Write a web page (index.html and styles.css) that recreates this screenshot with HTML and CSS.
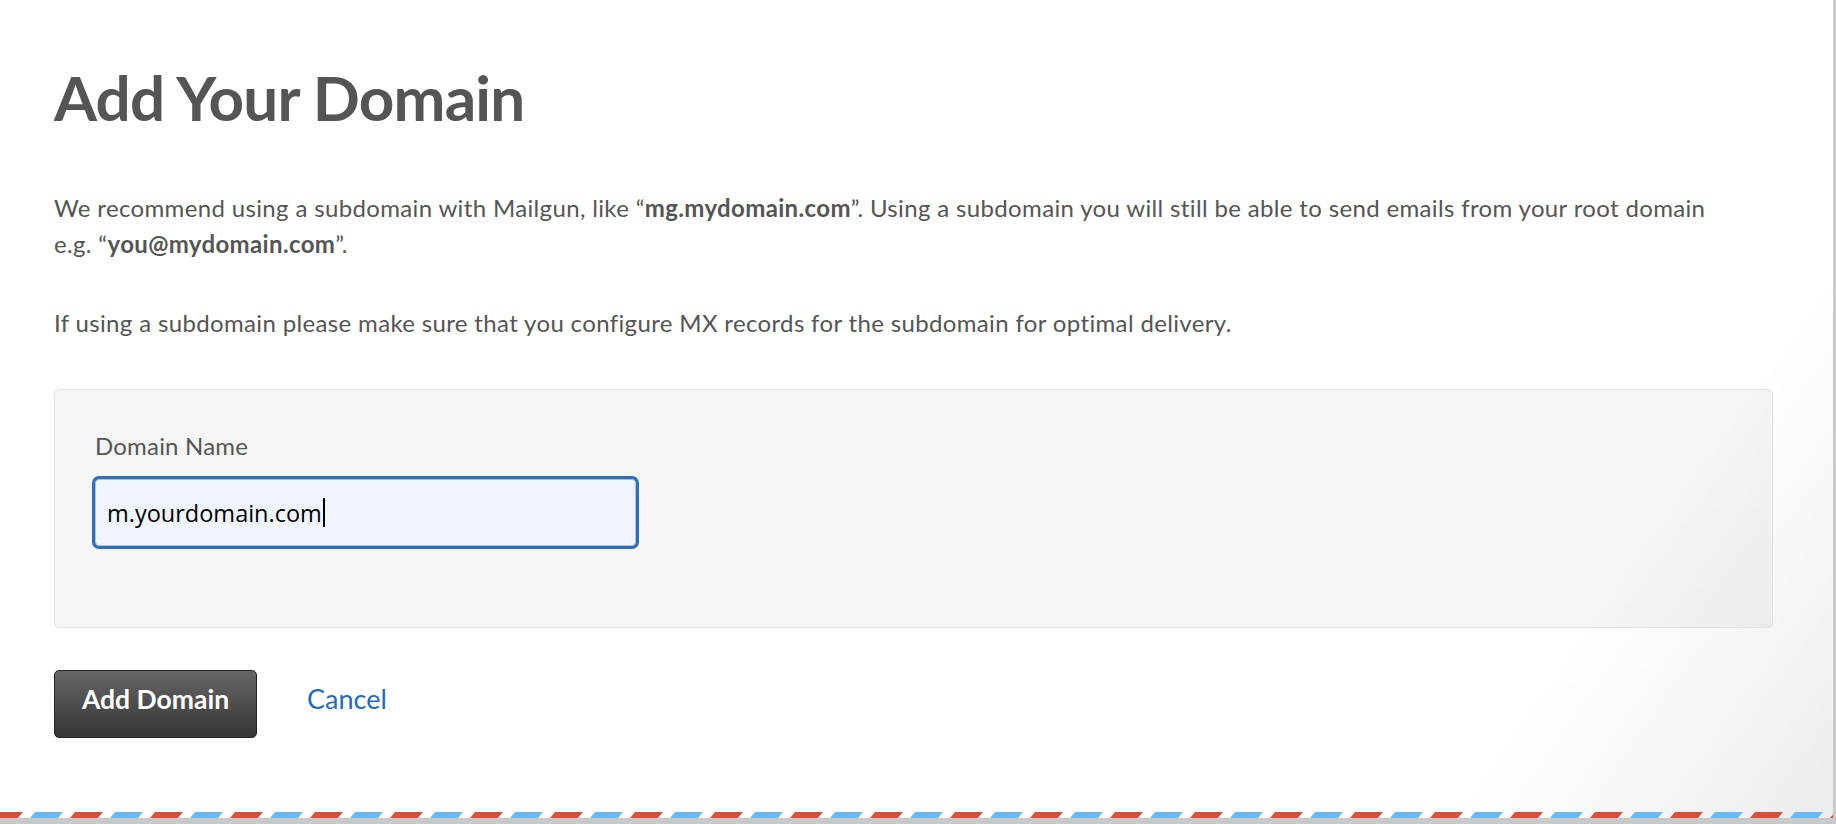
FILE: index.html
```html
<!DOCTYPE html>
<html lang="en">
<head>
<meta charset="utf-8">
<title>Add Your Domain</title>
<link rel="stylesheet" href="styles.css">
</head>
<body>
<div class="page">
  <main class="content">
    <h1 class="title">Add Your Domain</h1>
    <p class="lead">We recommend using a subdomain with Mailgun, like “<b>mg.mydomain.com</b>”. Using a subdomain you will still be able to send emails from your root domain<br>e.g. “<b>you@mydomain.com</b>”.</p>
    <p class="lead lead-second">If using a subdomain please make sure that you configure MX records for the subdomain for optimal delivery.</p>
    <form class="well">
      <label class="field-label">Domain Name</label>
      <div class="field-input"><span class="field-value">m.yourdomain.com</span><span class="caret"></span></div>
    </form>
    <div class="actions">
      <button class="btn" type="button">Add Domain</button>
      <a class="cancel" href="#">Cancel</a>
    </div>
  </main>
  <div class="airmail">
    <svg width="100%" height="6" xmlns="http://www.w3.org/2000/svg">
      <defs>
        <pattern id="stripes" x="-10" y="0" width="80" height="6" patternUnits="userSpaceOnUse">
          <polygon points="0,6 28,6 33,0 5,0" fill="#d94f3f"/>
          <polygon points="40,6 68,6 73,0 45,0" fill="#6cb8f2"/>
        </pattern>
      </defs>
      <rect width="100%" height="6" fill="url(#stripes)"/>
    </svg>
  </div>
</div>
</body>
</html>
```

FILE: styles.css
```css
html, body {
  margin: 0;
  padding: 0;
}

body {
  background: #c9c9c9;
  padding: 0 3px 6px 0;
  height: 824px;
  box-sizing: border-box;
  font-family: Lato, "Open Sans", "Liberation Sans", sans-serif;
  color: #555555;
}

.page {
  height: 818px;
  display: flex;
  flex-direction: column;
  background: linear-gradient(125deg, #ffffff 84%, #ececec 100%);
}

.content {
  padding: 60px 60px 0 54px;
}

.title {
  margin: 0;
  font-size: 62px;
  line-height: 74px;
  font-weight: 700;
  letter-spacing: -0.8px;
  color: #555555;
}

.lead {
  margin: 56px 0 0 0;
  font-size: 24px;
  line-height: 36px;
  letter-spacing: 0.35px;
  color: #555555;
}

.lead b {
  font-weight: 700;
}

.lead-second {
  margin-top: 43px;
}

.well {
  margin: 48px 0 0 0;
  padding: 38px 40px 81px 40px;
  background: rgba(0, 0, 0, 0.04);
  border: 1px solid #e2e2e2;
  border-radius: 5px;
}

.field-label {
  display: block;
  font-size: 24px;
  line-height: 36px;
  letter-spacing: 0.2px;
  color: #555555;
}

.field-input {
  margin-top: 15px;
  width: 541px;
  height: 67px;
  box-sizing: border-box;
  display: flex;
  align-items: center;
  padding-left: 11px;
  background: #f0f5fd;
  border: 1px solid #b9c0ca;
  border-radius: 4px;
  box-shadow: 0 0 0 3px #2b6fbf;
  font-family: "Open Sans", "DejaVu Sans", sans-serif;
  font-size: 23.5px;
  color: #000000;
}

.caret {
  display: inline-block;
  width: 2px;
  height: 29px;
  background: #000000;
  margin-left: 1px;
}

.actions {
  margin-top: 42px;
  display: flex;
  align-items: baseline;
  gap: 50px;
}

.btn {
  width: 203px;
  height: 68px;
  box-sizing: border-box;
  border: 1px solid #252525;
  border-radius: 5px;
  background: linear-gradient(#666666, #353535);
  color: #ffffff;
  font-family: Lato, "Open Sans", sans-serif;
  font-size: 26.5px;
  font-weight: 700;
  padding: 0 0 10px 0;
  cursor: pointer;
}

.cancel {
  font-size: 27px;
  color: #1f6cc0;
  text-decoration: none;
}

.airmail {
  margin-top: auto;
  height: 6px;
  line-height: 0;
}

.airmail svg {
  display: block;
}
```
